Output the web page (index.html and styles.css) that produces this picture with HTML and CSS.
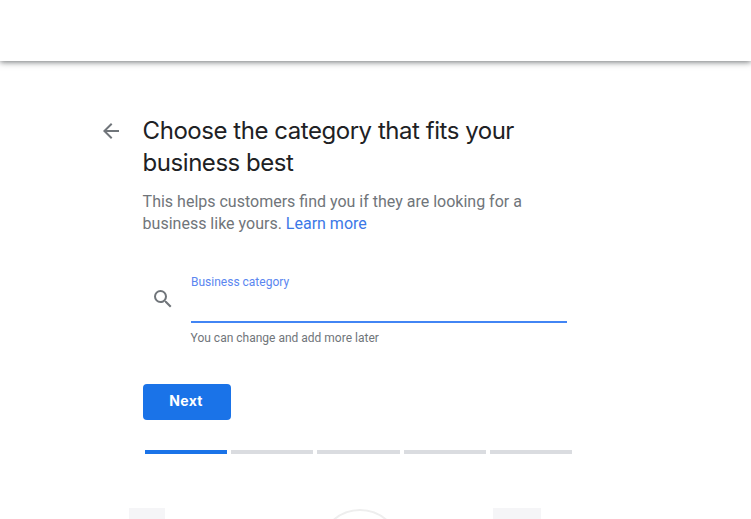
FILE: index.html
```html
<!DOCTYPE html>
<html lang="en">
<head>
<meta charset="utf-8">
<title>Choose the category</title>
<link rel="stylesheet" href="styles.css">
</head>
<body>
<header class="topbar"></header>
<main class="page">
  <div class="title-row">
    <svg class="back" width="24" height="24" viewBox="0 0 24 24"><path d="M20 11H7.83l5.59-5.59L12 4l-8 8 8 8 1.41-1.41L7.83 13H20z" fill="#70757a"/></svg>
    <div class="title-copy">
      <h1>Choose the category that fits your business best</h1>
      <p class="lead">This helps customers find you if they are looking for a business like yours. <a href="#">Learn more</a></p>
    </div>
  </div>
  <div class="field-row">
    <svg class="search" width="24" height="24" viewBox="0 0 24 24"><path d="M15.5 14h-.79l-.28-.27A6.47 6.47 0 0 0 16 9.5 6.5 6.5 0 1 0 9.5 16c1.61 0 3.09-.59 4.23-1.57l.27.28v.79l5 4.99L20.49 19l-4.99-5zm-6 0C7.01 14 5 11.99 5 9.5S7.01 5 9.5 5 14 7.01 14 9.5 11.99 14 9.5 14z" fill="#70757a"/></svg>
    <div class="field">
      <label class="field-label">Business category</label>
      <div class="field-line"></div>
      <div class="field-hint">You can change and add more later</div>
    </div>
  </div>
  <button class="next">Next</button>
  <div class="progress">
    <span class="step active"></span>
    <span class="step"></span>
    <span class="step"></span>
    <span class="step"></span>
    <span class="step"></span>
  </div>
  <div class="illustration">
    <span class="block block-left"></span>
    <span class="ring"></span>
    <span class="block block-right"></span>
  </div>
</main>
</body>
</html>
```
FILE: styles.css
```css
html, body { margin: 0; padding: 0; height: 519px; overflow: hidden; background: #fff; }
body { font-family: Roboto, "Liberation Sans", sans-serif; }
.topbar { height: 61px; background: #fff; box-shadow: 0 1px 6px rgba(60,64,67,.75); position: relative; }
.page { padding: 52px 0 0 99px; width: 480px; height: 406px; overflow: hidden; }
.title-row { display: flex; gap: 20px; align-items: flex-start; }
.back { flex: none; margin-top: 6px; }
.title-copy { width: 390px; padding-top: 2px; }
h1 { margin: 0 0 0 -0.4px; font: 400 24px/32px Inter, sans-serif; color: #202124; letter-spacing: -0.46px; }
.lead { margin: 12px 0 0 -0.4px; font-size: 16px; line-height: 22px; color: #70757a; }
.lead a { color: #3b78e7; text-decoration: none; }
.field-row { display: flex; margin: 39px 0 0 44px; }
.search { flex: none; margin: 13px 16.5px 0 7.5px; }
.field { width: 376px; }
.field-label { display: block; font-size: 12px; line-height: 16px; color: #5a86f0; height: 47px; }
.field-line { height: 2px; background: #4285f4; }
.field-hint { margin: 7px 0 0 -0.4px; font-size: 12px; line-height: 16px; color: #70757a; }
.next { display: block; margin: 38px 0 0 44px; width: 88px; height: 36px; border: 0; border-radius: 4px; background: #1a73e8; color: #fff; font: 700 14px/34px Inter, sans-serif; padding: 0 2px 2px 0; letter-spacing: .3px; }
.progress { display: flex; gap: 4px; margin: 30px 0 0 46px; width: 427px; }
.step { flex: 1; height: 4px; background: #dadce0; }
.step.active { background: #1a73e8; }
.illustration { position: relative; height: 60px; margin-top: 54px; }
.block { position: absolute; top: 0; height: 40px; background: #f5f5f7; }
.block-left { left: 30px; width: 36px; }
.block-right { left: 394px; width: 48px; }
.ring { position: absolute; left: 220px; top: 1px; width: 78px; height: 78px; border: 2px solid #eeeeee; border-radius: 50%; }
```
